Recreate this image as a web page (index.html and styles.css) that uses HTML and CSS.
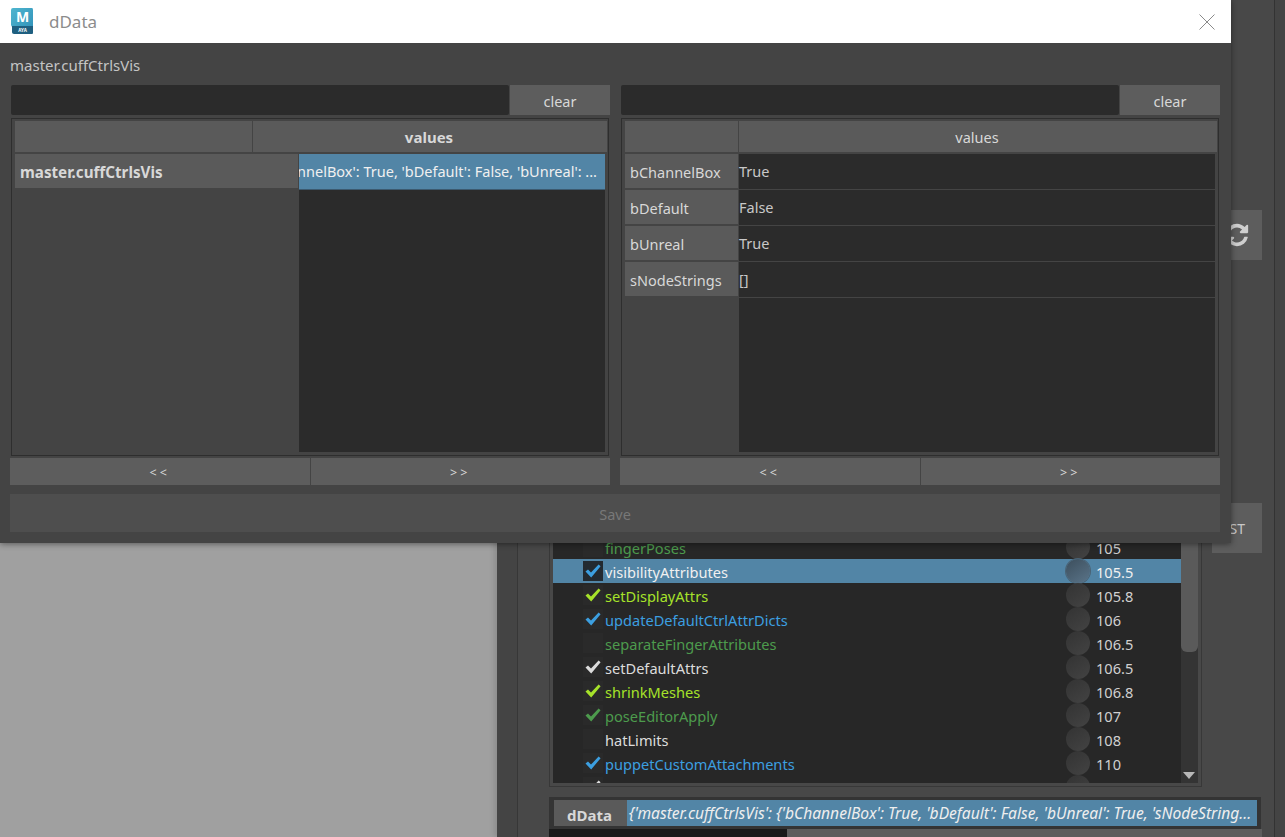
FILE: index.html
```html
<!DOCTYPE html>
<html lang="en">
<head>
  <meta charset="UTF-8">
  <title>dData</title>
  <link rel="stylesheet" href="styles.css">
</head>
<body>
  <svg class="defs" width="0" height="0">
    <symbol id="check" viewBox="0 0 16 14">
      <path d="M0.5 7.5 L3 5.5 L6 8.6 L13.6 0.6 L15.6 2.2 L6.2 13.4z" fill="currentColor"/>
    </symbol>
  </svg>

  <div class="stage">
    <!-- window behind the dialog -->
    <div class="back">
      <div class="back-inner">
        <div class="back-main">
          <div class="side-buttons">
            <button class="tool refresh">
              <svg viewBox="0 0 1792 1792" width="26" height="26"><path fill="#cfcfcf" d="M1639 1056q0 5-1 7-64 268-268 434.5t-478 166.5q-146 0-282.5-55t-243.5-157l-129 129q-19 19-45 19t-45-19-19-45v-448q0-26 19-45t45-19h448q26 0 45 19t19 45-19 45l-137 137q71 66 161 102t187 36q134 0 250-65t186-179q11-17 53-117 8-23 30-23h192q13 0 22.5 9.5t9.5 22.5zm25-800v448q0 26-19 45t-45 19h-448q-26 0-45-19t-19-45 19-45l138-138q-148-137-349-137-134 0-250 65t-186 179q-11 17-53 117-8 23-30 23h-199q-13 0-22.5-9.5t-9.5-22.5v-7q65-268 270-434.5t480-166.5q146 0 284 55.5t245 156.5l130-129q19-19 45-19t45 19 19 45z"/></svg>
            </button>
            <button class="tool test">TEST</button>
          </div>
          <div class="list-frame">
            <div class="list">
              <div class="row c-green"><span class="box"></span><span class="name">fingerPoses</span><span class="dot"></span><span class="num">105</span></div>
              <div class="row c-white selected"><span class="box"><svg class="tick c-blue"><use href="#check"/></svg></span><span class="name">visibilityAttributes</span><span class="dot"></span><span class="num">105.5</span></div>
              <div class="row c-lime"><span class="box"><svg class="tick"><use href="#check"/></svg></span><span class="name">setDisplayAttrs</span><span class="dot"></span><span class="num">105.8</span></div>
              <div class="row c-blue"><span class="box"><svg class="tick"><use href="#check"/></svg></span><span class="name">updateDefaultCtrlAttrDicts</span><span class="dot"></span><span class="num">106</span></div>
              <div class="row c-green"><span class="box"></span><span class="name">separateFingerAttributes</span><span class="dot"></span><span class="num">106.5</span></div>
              <div class="row c-white"><span class="box"><svg class="tick"><use href="#check"/></svg></span><span class="name">setDefaultAttrs</span><span class="dot"></span><span class="num">106.5</span></div>
              <div class="row c-lime"><span class="box"><svg class="tick"><use href="#check"/></svg></span><span class="name">shrinkMeshes</span><span class="dot"></span><span class="num">106.8</span></div>
              <div class="row c-green"><span class="box"><svg class="tick"><use href="#check"/></svg></span><span class="name">poseEditorApply</span><span class="dot"></span><span class="num">107</span></div>
              <div class="row c-white"><span class="box"></span><span class="name">hatLimits</span><span class="dot"></span><span class="num">108</span></div>
              <div class="row c-blue"><span class="box"><svg class="tick"><use href="#check"/></svg></span><span class="name">puppetCustomAttachments</span><span class="dot"></span><span class="num">110</span></div>
              <div class="row c-white"><span class="box"><svg class="tick"><use href="#check"/></svg></span><span class="name">createReferenceSetup</span><span class="dot"></span><span class="num">111</span></div>
            </div>
            <div class="scrollbar">
              <div class="thumb"></div>
              <div class="arrow"></div>
            </div>
          </div>
        </div>
        <div class="data-frame">
          <span class="data-label">dData</span>
          <span class="data-value">{'master.cuffCtrlsVis': {'bChannelBox': True, 'bDefault': False, 'bUnreal': True, 'sNodeString...</span>
        </div>
        <div class="progress"><div class="progress-fill"></div></div>
      </div>
    </div>

    <!-- dData dialog -->
    <div class="dialog">
      <div class="titlebar">
        <svg class="app-icon" viewBox="0 0 24 26" width="24" height="26">
          <defs>
            <linearGradient id="mayaTop" x1="0" y1="0" x2="1" y2="1">
              <stop offset="0" stop-color="#4fb6cf"/>
              <stop offset="1" stop-color="#2f8fb8"/>
            </linearGradient>
          </defs>
          <path d="M3 0 H22 Q23 0 23 2 V25 H4 Q2 25 2 23 V19 L1 17 V2 Q1 0 3 0z" fill="url(#mayaTop)"/>
          <path d="M2 18 H23 V25 Q23 26 22 26 H4 Q2 26 2 24z" fill="#1f5f80"/>
          <text x="12.5" y="14" class="icon-m">M</text>
          <text x="12.5" y="23.5" class="icon-aya">AYA</text>
        </svg>
        <span class="title">dData</span>
        <svg class="close" viewBox="0 0 16 16" width="16" height="16"><path d="M0.5 0.5 L15.5 15.5 M15.5 0.5 L0.5 15.5" stroke="#8a8a8a" stroke-width="1" fill="none"/></svg>
      </div>
      <div class="dialog-body">
        <div class="path-label">master.cuffCtrlsVis</div>
        <div class="panes">
          <div class="pane">
            <div class="filter">
              <input type="text" class="filter-input">
              <button class="btn-clear">clear</button>
            </div>
            <div class="table">
              <div class="thead">
                <div class="th wide"></div>
                <div class="th grow strong">values</div>
              </div>
              <div class="tbody">
                <div class="col-head wide-head">
                  <div class="rh strong">master.cuffCtrlsVis</div>
                </div>
                <div class="col-cells">
                  <div class="cell selected trunc"><span>{'bChannelBox': True, 'bDefault': False, 'bUnreal': ...</span></div>
                </div>
              </div>
            </div>
            <div class="pager">
              <button class="page-btn">&lt;&lt;</button>
              <button class="page-btn">&gt;&gt;</button>
            </div>
          </div>
          <div class="pane">
            <div class="filter">
              <input type="text" class="filter-input">
              <button class="btn-clear">clear</button>
            </div>
            <div class="table">
              <div class="thead">
                <div class="th narrow"></div>
                <div class="th grow">values</div>
              </div>
              <div class="tbody">
                <div class="col-head narrow-head">
                  <div class="rh">bChannelBox</div>
                  <div class="rh">bDefault</div>
                  <div class="rh">bUnreal</div>
                  <div class="rh">sNodeStrings</div>
                </div>
                <div class="col-cells">
                  <div class="cell">True</div>
                  <div class="cell">False</div>
                  <div class="cell">True</div>
                  <div class="cell">[]</div>
                </div>
              </div>
            </div>
            <div class="pager">
              <button class="page-btn">&lt;&lt;</button>
              <button class="page-btn">&gt;&gt;</button>
            </div>
          </div>
        </div>
        <button class="save" disabled>Save</button>
      </div>
    </div>
  </div>
</body>
</html>
```

FILE: styles.css
```css
* {
  box-sizing: border-box;
}
body {
  margin: 0;
  font-family: "Noto Sans", "Open Sans", sans-serif;
  font-size: 14px;
  color: #d8d8d8;
  background: #a0a0a0;
}
button {
  font-family: inherit;
  border: none;
  padding: 0;
}
.defs {
  position: absolute;
}
.stage {
  position: relative;
  width: 1285px;
  height: 837px;
  overflow: hidden;
  background: #a0a0a0;
}

/* back window */
.back {
  position: absolute;
  left: 497px;
  top: 0;
  right: 0;
  bottom: 0;
  background: #444;
  box-shadow: -3px 0 5px rgba(0,0,0,0.12);
  border-right: 10px solid #444;
}
.back-inner {
  height: 100%;
  margin-left: 20px;
  padding-left: 31px;
  border-left: 1px solid #373737;
  border-right: 1px solid #333;
  background: #484848;
  display: flex;
  flex-direction: column;
}
.back-main {
  display: flex;
  flex-direction: row-reverse;
  justify-content: flex-end;
  height: 787px;
  flex: none;
}
.side-buttons {
  width: 50px;
  margin-left: 10px;
  padding-top: 210px;
  display: flex;
  flex-direction: column;
  gap: 243px;
}
.tool {
  width: 50px;
  height: 50px;
  background: #5d5d5d;
  color: #c8c8c8;
  font-size: 14px;
  display: flex;
  align-items: center;
  justify-content: center;
}
.test {
  padding-right: 15px;
}
.list-frame {
  width: 653px;
  margin-top: 511px;
  height: 276px;
  border: 1px solid #383838;
  border-top: none;
  padding: 0 3px 3px;
  display: flex;
}
.list {
  flex: 1;
  background: #272727;
  overflow: hidden;
  padding-top: 24px;
}
.row {
  height: 24px;
  display: flex;
  align-items: center;
  font-size: 14.6px;
}
.row.selected {
  background: #5285a6;
}
.box {
  width: 20px;
  height: 20px;
  margin-left: 30px;
  background: #2a2a2a;
  display: flex;
  align-items: center;
  justify-content: center;
}
.row.selected .box {
  background: #232a30;
}
.tick {
  width: 16px;
  height: 14px;
  color: inherit;
}
.name {
  margin-left: 2px;
  width: 461px;
  padding-top: 2px;
  white-space: nowrap;
}
.dot {
  width: 24px;
  height: 24px;
  border-radius: 50%;
  background: linear-gradient(145deg, #333, #434343);
  flex: none;
}
.row.selected .dot {
  background: linear-gradient(145deg, #3c4e5c, #5a7489);
  box-shadow: 0 0 0 1px #4a6273;
}
.num {
  margin-left: 6px;
  padding-top: 2px;
  color: #d0d0d0;
}
.row.selected .num,
.row.selected .name {
  color: #f0f0f0;
}
.c-green { color: #4d9b4d; }
.c-lime { color: #a6e22a; }
.c-blue { color: #3c9fe0; }
.c-white { color: #dcdcdc; }
.scrollbar {
  width: 17px;
  background: #343434;
  position: relative;
}
.thumb {
  height: 141px;
  width: 17px;
  background: #5a5a5a;
  border-radius: 0 0 6px 6px;
}
.arrow {
  position: absolute;
  left: 2px;
  bottom: 4px;
  border-left: 6px solid transparent;
  border-right: 6px solid transparent;
  border-top: 7px solid #b8b8b8;
}
.data-frame {
  flex: none;
  margin-top: 10px;
  width: 712px;
  height: 32px;
  background: #343434;
  padding: 3px 4px 3px 5px;
  display: flex;
}
.data-label {
  width: 73px;
  background: #5a5a5a;
  font-weight: bold;
  font-size: 15px;
  text-align: center;
  line-height: 31px;
  padding-right: 2px;
}
.data-value {
  flex: 1;
  background: #5285a6;
  font-style: italic;
  font-size: 15.6px;
  color: #eee;
  line-height: 27px;
  padding-left: 2px;
  white-space: nowrap;
  overflow: hidden;
}
.progress {
  flex: none;
  width: 713px;
  height: 8px;
  background: #5d5d5d;
}
.progress-fill {
  width: 238px;
  height: 8px;
  background: #1a1a1a;
}

/* dialog */
.dialog {
  position: absolute;
  left: 0;
  top: 0;
  width: 1231px;
  height: 543px;
  background: #444;
  box-shadow: 0 1px 6px rgba(0,0,0,0.45);
  display: flex;
  flex-direction: column;
}
.titlebar {
  height: 43px;
  flex: none;
  background: #fff;
  display: flex;
  align-items: center;
  padding-left: 10px;
}
.app-icon {
  margin-top: -2px;
}
.icon-m {
  font-family: "Noto Sans", sans-serif;
  font-weight: bold;
  font-size: 14px;
  fill: #fff;
  text-anchor: middle;
}
.icon-aya {
  font-family: "Noto Sans", sans-serif;
  font-weight: bold;
  font-size: 4.5px;
  fill: #fff;
  text-anchor: middle;
}
.title {
  margin-left: 15px;
  font-size: 17px;
  color: #8c8c8c;
}
.close {
  margin-left: auto;
  margin-right: 16px;
}
.dialog-body {
  flex: 1;
  padding: 0 11px 0 10px;
  display: flex;
  flex-direction: column;
}
.path-label {
  height: 42px;
  line-height: 44px;
  font-size: 15px;
  color: #c4c4c4;
}
.panes {
  display: flex;
  gap: 10px;
}
.pane {
  width: 600px;
}
.filter {
  display: flex;
  height: 30px;
  margin-left: 1px;
}
.filter-input {
  width: 498px;
  height: 30px;
  background: #2b2b2b;
  border: none;
  border-radius: 2px;
  outline: none;
}
.btn-clear {
  width: 100px;
  margin-left: 1px;
  height: 30px;
  padding-top: 2px;
  background: #5d5d5d;
  color: #d8d8d8;
  font-size: 14.5px;
}
.table {
  margin-left: 1px;
  margin-top: 3px;
  width: 598px;
  height: 338px;
  border: 1px solid #2e2e2e;
  padding: 2px 1px 2px 3px;
  display: flex;
  flex-direction: column;
}
.thead {
  display: flex;
  height: 31px;
  gap: 1px;
  flex: none;
  margin-bottom: 2px;
}
.th {
  background: #5a5a5a;
  text-align: center;
  line-height: 33px;
  font-size: 14.5px;
  padding-right: 2px;
}
.th.strong {
  font-size: 15px;
}
.th.wide {
  width: 237px;
}
.th.narrow {
  width: 113px;
}
.th.grow {
  flex: 1;
}
.strong {
  font-weight: bold;
}
.tbody {
  flex: 1;
  display: flex;
  gap: 1px;
}
.col-head {
  flex: none;
  display: flex;
  flex-direction: column;
  gap: 2px;
}
.wide-head {
  width: 283px;
}
.narrow-head {
  width: 113px;
}
.rh {
  height: 34px;
  background: #5a5a5a;
  line-height: 36px;
  padding-left: 5px;
  font-size: 14.5px;
  white-space: nowrap;
}
.rh.strong {
  font-size: 15.2px;
}
.col-cells {
  flex: 1;
  min-width: 0;
  background: #2b2b2b;
  margin-right: 2px;
  margin-bottom: 1px;
}
.cell {
  height: 36px;
  border-bottom: 1px solid #444;
  line-height: 35px;
  font-size: 14.5px;
  color: #c8c8c8;
}
.cell.selected {
  background: #5285a6;
  color: #f0f0f0;
  border-bottom: 1px solid #3c5a70;
}
.trunc {
  display: flex;
  justify-content: flex-end;
  padding-right: 8px;
  overflow: hidden;
  white-space: nowrap;
}
.trunc span {
  flex: none;
}
.pager {
  margin-top: 2px;
  height: 27px;
  display: flex;
  gap: 1px;
}
.page-btn {
  flex: 1;
  padding-top: 2px;
  background: #5d5d5d;
  color: #d8d8d8;
  font-size: 12.5px;
  letter-spacing: 3px;
}
.save {
  margin-top: 9px;
  width: 1210px;
  height: 38px;
  padding-top: 2px;
  background: #4e4e4e;
  color: #787878;
  font-size: 14.5px;
}
```
